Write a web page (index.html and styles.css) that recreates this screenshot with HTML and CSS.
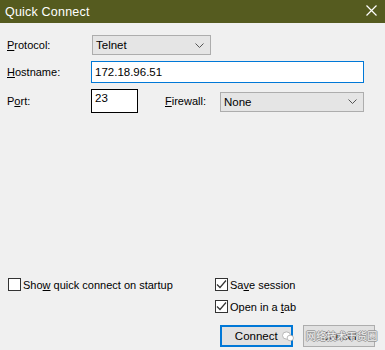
FILE: index.html
```html
<!DOCTYPE html>
<html lang="en">
<head>
    <meta charset="UTF-8">
    <title>Quick Connect</title>
    <link rel="stylesheet" href="styles.css">
</head>
<body>
    <div class="window">
        <div class="titlebar">
            <span class="title">Quick Connect</span>
            <svg class="close" width="11" height="11" viewBox="0 0 11 11">
                <path d="M0.5 0.5 L10.5 10.5 M10.5 0.5 L0.5 10.5" stroke="#fff" stroke-width="1.2"/>
            </svg>
        </div>

        <div class="content">
            <div class="row row-protocol">
                <label class="label"><u>P</u>rotocol:</label>
                <div class="select select-protocol">
                    <span>Telnet</span>
                    <svg class="chevron" width="9" height="5" viewBox="0 0 9 5"><path d="M0.5 0.5 L4.5 4.5 L8.5 0.5" fill="none" stroke="#555" stroke-width="1"/></svg>
                </div>
            </div>
            <div class="row row-host">
                <label class="label"><u>H</u>ostname:</label>
                <div class="input input-host">172.18.96.51</div>
            </div>
            <div class="row row-port">
                <label class="label">P<u>o</u>rt:</label>
                <div class="input input-port">23</div>
                <label class="label label-fw"><u>F</u>irewall:</label>
                <div class="select select-fw">
                    <span>None</span>
                    <svg class="chevron" width="9" height="5" viewBox="0 0 9 5"><path d="M0.5 0.5 L4.5 4.5 L8.5 0.5" fill="none" stroke="#555" stroke-width="1"/></svg>
                </div>
            </div>

            <div class="bottom">
                <div class="checks">
                    <div class="col-left">
                        <div class="check"><span class="box"></span><span>Sho<u>w</u> quick connect on startup</span></div>
                    </div>
                    <div class="col-right">
                        <div class="check"><span class="box checked"><svg width="11" height="11" viewBox="0 0 11 11"><path d="M1 5.5 L4 8.5 L10 1.5" fill="none" stroke="#333" stroke-width="1.2"/></svg></span><span>Sa<u>v</u>e session</span></div>
                        <div class="check"><span class="box checked"><svg width="11" height="11" viewBox="0 0 11 11"><path d="M1 5.5 L4 8.5 L10 1.5" fill="none" stroke="#333" stroke-width="1.2"/></svg></span><span>Open in a <u>t</u>ab</span></div>
                    </div>
                </div>
                <div class="buttons">
                    <button class="btn btn-default">Connect</button>
                    <button class="btn">Cancel</button>
                    <div class="watermark">
                        <svg width="12" height="11" viewBox="0 0 12 11"><ellipse cx="4.5" cy="4.5" rx="4" ry="3.6" fill="#fff" stroke="#aaa" stroke-width="0.8"/><ellipse cx="8.3" cy="7" rx="3.2" ry="2.8" fill="#fff" stroke="#aaa" stroke-width="0.8"/></svg>
                        <span class="wm-text">网络技术干货圈</span>
                    </div>
                </div>
            </div>
        </div>
    </div>
</body>
</html>
```

FILE: styles.css
```css
body {
    margin: 0;
    background-color: #f0f0f0;
    font-family: "Liberation Sans", Arial, sans-serif;
    font-size: 11px;
    color: #000;
}
.window {
    width: 385px;
    height: 350px;
    display: flex;
    flex-direction: column;
    overflow: hidden;
}
.titlebar {
    height: 23px;
    background-color: #555b1f;
    color: #fff;
    display: flex;
    align-items: center;
    justify-content: space-between;
    padding: 0 8px 0 5px;
    flex-shrink: 0;
}
.title {
    font-size: 12.5px;
    letter-spacing: 0.2px;
}
.close {
    margin-top: -3px;
}
.content {
    flex: 1;
    display: flex;
    flex-direction: column;
    padding: 12px 0 0 7px;
}
.row {
    display: flex;
    align-items: center;
}
.label {
    width: 84px;
    flex-shrink: 0;
}
.row-host {
    margin-top: 6px;
}
.row-port {
    margin-top: 6px;
}
.select {
    box-sizing: border-box;
    height: 20px;
    background-color: #e5e5e5;
    border: 1px solid #adadad;
    display: flex;
    align-items: center;
    justify-content: space-between;
    padding: 0 6px 0 3px;
    font-size: 11.5px;
}
.select-protocol {
    width: 119px;
    margin-left: 1px;
}
.input {
    box-sizing: border-box;
    background-color: #fff;
    display: flex;
    align-items: center;
    padding-left: 3px;
    font-size: 11.5px;
}
.input-host {
    width: 273px;
    height: 22px;
    border: 1px solid #0078d7;
}
.input-port {
    width: 47px;
    height: 24px;
    border: 1px solid #000;
    align-items: flex-start;
    padding-top: 2px;
}
.label-fw {
    width: 55px;
    margin-left: 27px;
}
.select-fw {
    width: 144px;
    margin-top: 1px;
}
.bottom {
    margin-top: auto;
    padding-bottom: 3px;
}
.checks {
    display: flex;
}
.col-left {
    width: 207px;
    padding-left: 1px;
}
.col-right {
    display: flex;
    flex-direction: column;
    gap: 9px;
}
.check {
    display: flex;
    align-items: center;
    height: 13px;
}
.box {
    box-sizing: border-box;
    width: 13px;
    height: 13px;
    border: 1px solid #333;
    background-color: #fff;
    margin-right: 2px;
    display: flex;
    align-items: center;
    justify-content: center;
}
.buttons {
    display: flex;
    margin-top: 12px;
    padding-left: 213px;
    position: relative;
}
.btn {
    box-sizing: border-box;
    width: 73px;
    height: 22px;
    font-family: inherit;
    font-size: 11.5px;
    background-color: #e1e1e1;
    border: 1px solid #adadad;
    padding: 0;
    margin-right: 10px;
}
.btn-default {
    border: 2px solid #0078d7;
}
.watermark {
    position: absolute;
    left: 275px;
    top: 4px;
    display: flex;
    align-items: center;
    color: rgba(255, 255, 255, 0.85);
    font-family: "Noto Sans CJK SC", sans-serif;
    font-size: 10px;
    line-height: 14px;
    text-shadow: 1px 0 0 #999, -1px 0 0 #999, 0 1px 0 #999, 0 -1px 0 #999;
}
.wm-text {
    margin-left: 12px;
    letter-spacing: 0.2px;
}
```
